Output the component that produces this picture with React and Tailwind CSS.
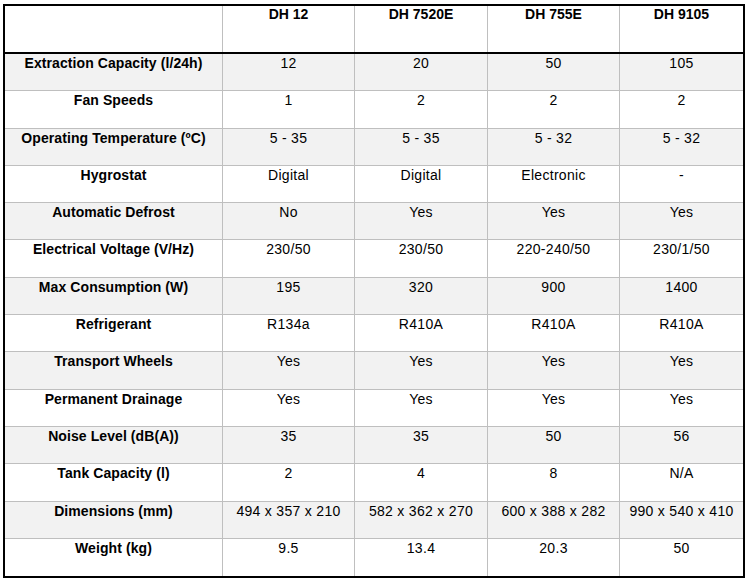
import React from "react";

const models = ["DH 12", "DH 7520E", "DH 755E", "DH 9105"];

const rows = [
  ["Extraction Capacity (l/24h)", "12", "20", "50", "105"],
  ["Fan Speeds", "1", "2", "2", "2"],
  ["Operating Temperature (ºC)", "5 - 35", "5 - 35", "5 - 32", "5 - 32"],
  ["Hygrostat", "Digital", "Digital", "Electronic", "-"],
  ["Automatic Defrost", "No", "Yes", "Yes", "Yes"],
  ["Electrical Voltage (V/Hz)", "230/50", "230/50", "220-240/50", "230/1/50"],
  ["Max Consumption (W)", "195", "320", "900", "1400"],
  ["Refrigerant", "R134a", "R410A", "R410A", "R410A"],
  ["Transport Wheels", "Yes", "Yes", "Yes", "Yes"],
  ["Permanent Drainage", "Yes", "Yes", "Yes", "Yes"],
  ["Noise Level (dB(A))", "35", "35", "50", "56"],
  ["Tank Capacity (l)", "2", "4", "8", "N/A"],
  ["Dimensions (mm)", "494 x 357 x 210", "582 x 362 x 270", "600 x 388 x 282", "990 x 540 x 410"],
  ["Weight (kg)", "9.5", "13.4", "20.3", "50"],
];

const App = () => {
  return (
    <div className="w-[748px] h-[586px] bg-white pt-[4px] pl-[3px] font-['Liberation_Sans',Arial,sans-serif] text-[14px] text-black">
      <div className="w-[742px] border-2 border-black">
        <div className="grid grid-cols-[218px_132px_133px_132px_1fr] h-[48px] border-b-2 border-black">
          <div className="border-r border-[#bfbfbf]" />
          {models.map((m, i) => (
            <div
              key={m}
              className={`text-center font-bold leading-[16px] ${i < 3 ? "border-r border-[#bfbfbf]" : ""}`}
            >
              {m}
            </div>
          ))}
        </div>
        {rows.map((row, r) => (
          <div
            key={row[0]}
            className={`grid grid-cols-[218px_132px_133px_132px_1fr] h-[37.3px] ${r % 2 === 0 ? "bg-[#f2f2f2]" : "bg-white"} ${r < rows.length - 1 ? "border-b border-[#bfbfbf]" : ""}`}
          >
            {row.map((cell, c) => (
              <div
                key={c}
                className={`text-center leading-[16px] pt-[1px] ${c === 0 ? "font-bold tracking-[0.08px]" : "tracking-[0.3px]"} ${c < 4 ? "border-r border-[#bfbfbf]" : ""}`}
              >
                {cell}
              </div>
            ))}
          </div>
        ))}
      </div>
    </div>
  );
};

export default App;
